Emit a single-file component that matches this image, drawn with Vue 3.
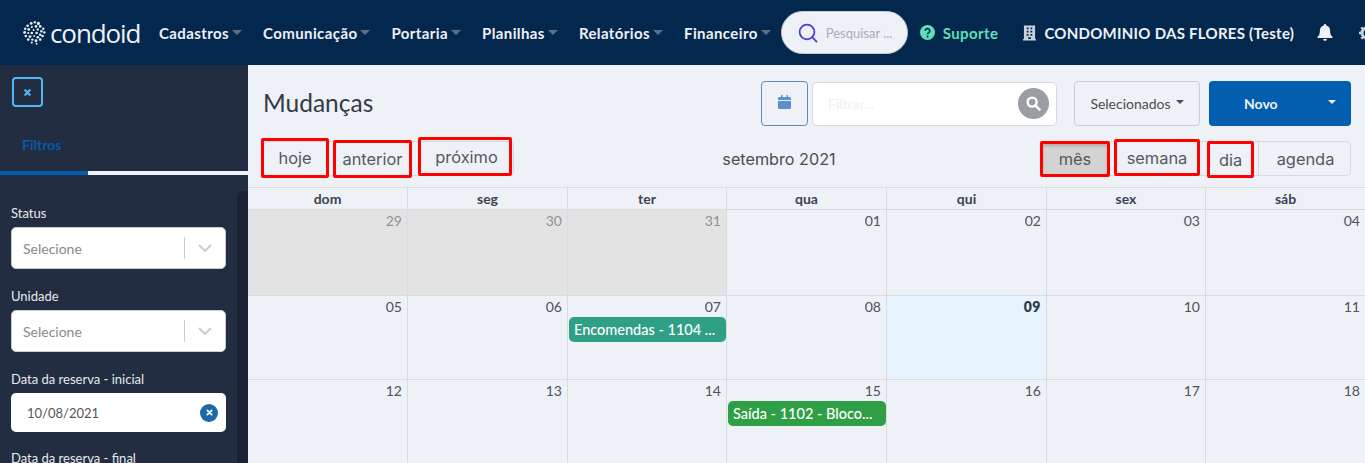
<script setup>
const menu = ['Cadastros', 'Comunicação', 'Portaria', 'Planilhas', 'Relatórios', 'Financeiro']
const weekdays = ['dom', 'seg', 'ter', 'qua', 'qui', 'sex', 'sáb']
const days = [
  { n: '29', off: true }, { n: '30', off: true }, { n: '31', off: true }, { n: '01' }, { n: '02' }, { n: '03' }, { n: '04' },
  { n: '05' }, { n: '06' }, { n: '07', event: 'Encomendas - 1104 ...', color: 'teal' }, { n: '08' }, { n: '09', today: true }, { n: '10' }, { n: '11' },
  { n: '12' }, { n: '13' }, { n: '14' }, { n: '15', event: 'Saída - 1102 - Bloco...', color: 'green' }, { n: '16' }, { n: '17' }, { n: '18' },
]
// pontos do logo
const dots = [[19,6,2.4],[25,4,2],[31,6,2.6],[13,10,2.2],[20,12,1.8],[27,11,2.2],[34,11,2.2],[39,15,2],[9,15,2],[15,16,2.4],[23,17,1.6],[30,16,2],[36,19,2.2],[8,21,2.4],[14,22,1.8],[20,22,2.2],[28,22,2.2],[41,21,2],[34,25,2.2],[10,27,2.2],[17,28,2.4],[24,27,1.6],[30,29,2.2],[38,27,2.2],[14,33,2.2],[21,33,2],[27,35,2.4],[34,33,2.2],[20,38,1.8],[28,40,1.6]]
</script>

<template>
  <div class="page">
    <header class="navbar">
      <div class="brand">
        <svg width="25" height="24" viewBox="6 2 37 40">
          <circle v-for="(d, i) in dots" :key="i" :cx="d[0]" :cy="d[1]" :r="d[2]" fill="#e8edf3" />
        </svg>
        <span>condoid</span>
      </div>
      <nav class="menu">
        <div v-for="m in menu" :key="m" class="menu-item">{{ m }}<i class="caret"></i></div>
      </nav>
      <div class="search">
        <svg width="20" height="20" viewBox="0 0 20 20" fill="none" stroke="#4b3fd8" stroke-width="1.8">
          <circle cx="9" cy="9" r="7.4" />
          <path d="M14.4 14.4 18.6 18.6" stroke-linecap="round" />
        </svg>
        <span>Pesquisar ...</span>
      </div>
      <div class="support">
        <svg width="15" height="15" viewBox="0 0 16 16">
          <circle cx="8" cy="8" r="8" fill="#5fe0bb" />
          <path d="M5.6 6.2a2.400 2.400 0 1 1 3.600 2.100c-.8.400-1.200.800-1.200 1.500" fill="none" stroke="#03274d" stroke-width="1.800" />
          <circle cx="8" cy="12.300" r="1.100" fill="#03274d" />
        </svg>
        <span>Suporte</span>
      </div>
      <div class="condo">
        <svg width="13" height="16" viewBox="0 0 14 16">
          <path fill="#c9d1da" fill-rule="evenodd" d="M1 0h12v14.500h1V16H0v-1.500h1zM4 2v2h2V2zM8 2v2h2V2zM4 5.500v2h2v-2zM8 5.500v2h2v-2zM4 9v2h2V9zM8 9v2h2V9zM5.500 12.500V14.500h3v-2z" />
        </svg>
        <span>CONDOMINIO DAS FLORES (Teste)</span>
      </div>
      <svg class="bell" width="16" height="17" viewBox="0 0 15 16">
        <path fill="#eef1f6" d="M7.500 0a1.200 1.200 0 0 1 1.200 1.300C11 1.800 12.300 3.600 12.300 6c0 3.600.9 4.800 2.200 6.100.3.400 0 1-.5 1H.9c-.5 0-.8-.6-.5-1C1.800 10.800 2.700 9.600 2.700 6c0-2.400 1.300-4.200 3.600-4.700A1.200 1.200 0 0 1 7.500 0zM5.700 14h3.600a1.800 1.800 0 0 1-3.600 0z" />
      </svg>
      <svg class="gear" width="16" height="16" viewBox="0 0 16 16">
        <circle cx="8" cy="8" r="5" fill="none" stroke="#c9d1da" stroke-width="3" />
        <path d="M8 0v3M8 13v3M0 8h3M13 8h3M2.300 2.300l2.100 2.100M11.600 11.600l2.100 2.100M2.300 13.700l2.100-2.100M11.600 4.400l2.100-2.100" stroke="#c9d1da" stroke-width="2.400" />
      </svg>
    </header>

    <div class="body">
      <aside class="sidebar">
        <button class="close-btn">
          <svg width="7" height="7" viewBox="0 0 8 8" stroke="#4db8f2" stroke-width="2.600" stroke-linecap="round">
            <path d="M1.500 1.500 6.500 6.500M6.500 1.500 1.500 6.500" />
          </svg>
        </button>
        <div class="tab-title">Filtros</div>
        <div class="tab-line"><div class="tab-active"></div></div>
        <div class="filters">
          <label>Status</label>
          <div class="select">
            <span>Selecione</span><i class="sep"></i>
            <svg width="14" height="8" viewBox="0 0 14 8" fill="none" stroke="#cccccc" stroke-width="2"><path d="M1 1 7 7 13 1" /></svg>
          </div>
          <label>Unidade</label>
          <div class="select">
            <span>Selecione</span><i class="sep"></i>
            <svg width="14" height="8" viewBox="0 0 14 8" fill="none" stroke="#cccccc" stroke-width="2"><path d="M1 1 7 7 13 1" /></svg>
          </div>
          <label>Data da reserva - inicial</label>
          <div class="date">
            <span>10/08/2021</span>
            <i class="clear">
              <svg width="7" height="7" viewBox="0 0 8 8" stroke="#fff" stroke-width="2" stroke-linecap="round"><path d="M1.500 1.500 6.500 6.500M6.500 1.500 1.500 6.500" /></svg>
            </i>
          </div>
          <label>Data da reserva - final</label>
        </div>
        <div class="side-scroll"></div>
      </aside>

      <main class="main">
        <div class="head">
          <h1>Mudanças</h1>
          <button class="cal-btn">
            <svg width="13" height="14" viewBox="0 0 13 14" fill="#5b8fd0">
              <path d="M3 0h1.500v2h4V0H10v2h1.500A1.500 1.500 0 0 1 13 3.500V5H0V3.500A1.500 1.500 0 0 1 1.500 2H3zM0 6h13v6.500a1.500 1.500 0 0 1-1.500 1.500h-10A1.500 1.500 0 0 1 0 12.500z" />
            </svg>
          </button>
          <div class="filter">
            <span>Filtrar...</span>
            <i class="filter-icon">
              <svg width="15" height="15" viewBox="0 0 16 16" fill="none" stroke="#fff" stroke-width="2.600">
                <circle cx="6.500" cy="6.500" r="4.800" />
                <path d="M10 10 14.500 14.500" stroke-linecap="round" />
              </svg>
            </i>
          </div>
          <button class="sel-btn">Selecionados<i class="sel-caret"></i></button>
          <button class="new-btn"><span>Novo</span><i class="new-caret"></i></button>
        </div>

        <div class="toolbar">
          <div class="tb-group tb-left">
            <button class="fc-btn mark b-hoje">hoje</button>
            <button class="fc-btn mark b-ant">anterior</button>
            <button class="fc-btn mark b-prox">próximo</button>
          </div>
          <div class="tb-title">setembro 2021</div>
          <div class="tb-group tb-right">
            <button class="fc-btn mark active b-mes">mês</button>
            <button class="fc-btn mark b-sem">semana</button>
            <button class="fc-btn mark b-dia">dia</button>
            <button class="fc-btn b-age">agenda</button>
          </div>
        </div>

        <div class="calendar">
          <div v-for="w in weekdays" :key="w" class="wd">{{ w }}</div>
          <div v-for="d in days" :key="d.n + d.off" class="day" :class="{ off: d.off, today: d.today }">
            <div class="num">{{ d.n }}</div>
            <div v-if="d.event" class="event" :class="d.color">{{ d.event }}</div>
          </div>
        </div>
      </main>
    </div>
  </div>
</template>

<style>
html, body { margin: 0; overflow: hidden; }
</style>

<style scoped>
.page { width: 1365px; height: 463px; overflow: hidden; font-family: Lato, "Noto Sans", sans-serif; display: flex; flex-direction: column; }
button { font-family: inherit; cursor: pointer; }
i { font-style: normal; }

.navbar { height: 65px; flex: none; background: #03274d; display: flex; align-items: center; color: #eef1f6; white-space: nowrap; overflow: hidden; }
.brand { display: flex; align-items: center; gap: 3px; margin-left: 22px; width: 137px; flex: none; }
.brand span { font-family: "Open Sans", sans-serif; font-size: 26px; letter-spacing: -1.1px; color: #eef1f6; }
.menu { display: flex; gap: 21px; }
.menu-item { font-size: 15px; font-weight: 700; letter-spacing: 0.4px; display: flex; align-items: center; }
.caret { width: 0; height: 0; border: 5px solid transparent; border-top: 5px solid #5e6f83; border-bottom: 0; margin-left: 3px; }
.search { width: 127px; height: 43px; box-sizing: border-box; background: #eef1f6; border-radius: 22px; border: 1px solid #c6cbd6; margin-left: 10px; display: flex; align-items: center; gap: 8px; padding-left: 16px; flex: none; }
.search span { font-size: 13px; color: #a9adbd; }
.support { display: flex; align-items: center; gap: 8px; margin-left: 12px; color: #5fe0bb; font-size: 15px; font-weight: 700; letter-spacing: 0.4px; }
.condo { display: flex; align-items: center; gap: 8px; margin-left: 25px; font-size: 15px; font-weight: 700; letter-spacing: 0.27px; }
.bell { margin-left: 23px; flex: none; }
.gear { margin-left: 26px; flex: none; }

.body { flex: 1; display: flex; min-height: 0; }
.sidebar { width: 248px; flex: none; background: #232d42; position: relative; color: #e6e9ee; }
.close-btn { width: 31px; height: 30px; margin: 12px 0 0 12px; padding: 0; background: transparent; border: 2px solid #4db8f2; border-radius: 4px; display: flex; align-items: center; justify-content: center; }
.tab-title { margin: 29px 0 0 22px; font-size: 14px; font-weight: 700; color: #0a58a8; }
.tab-line { margin-top: 18px; height: 4px; background: #eef1f6; }
.tab-active { width: 88px; height: 4px; background: #035eaf; }
.filters { padding: 30px 22px 0 11px; }
.filters label { display: block; font-size: 13px; line-height: 16px; margin-bottom: 6px; }
.select { height: 42px; box-sizing: border-box; background: #fff; border-radius: 5px; border: 1px solid #ccc; display: flex; align-items: center; padding-left: 11px; margin-bottom: 19px; }
.select span { flex: 1; font-size: 14px; color: #8a8a8a; }
.sep { width: 1px; height: 22px; background: #ccc; margin-right: 13px; }
.select svg { margin-right: 13px; }
.date { height: 39px; background: #fff; border-radius: 5px; display: flex; align-items: center; padding: 0 8px 0 16px; margin-bottom: 18px; }
.date span { flex: 1; font-size: 13px; color: #555; }
.clear { width: 18px; height: 18px; border-radius: 50%; background: #1b69a8; display: flex; align-items: center; justify-content: center; }
.side-scroll { position: absolute; right: 0; top: 126px; bottom: 0; width: 11px; background: #1a2333; border-radius: 6px 0 0 0; }

.main { flex: 1; min-width: 0; background: #eef1f6; }
.head { display: flex; align-items: center; height: 45px; margin-top: 16px; padding: 0 14px 0 15px; }
h1 { margin: 0 0 2px; flex: 1; font-size: 24.5px; font-weight: 400; color: #343a47; }
.cal-btn { width: 47px; height: 45px; box-sizing: border-box; background: #eef1f6; border: 1px solid #5b8ac4; border-radius: 4px; padding: 0; }
.filter { width: 245px; height: 44px; box-sizing: border-box; margin-left: 4px; background: #fff; border: 1px solid #d5dae2; border-radius: 5px; display: flex; align-items: center; padding: 0 7px 0 15px; }
.filter span { flex: 1; font-size: 14px; color: #eef1f6; }
.filter-icon { width: 31px; height: 31px; border-radius: 50%; background: #9a9da1; display: flex; align-items: center; justify-content: center; }
.sel-btn { width: 126px; height: 45px; box-sizing: border-box; margin-left: 17px; background: #eef1f6; border: 1px solid #c8ccd3; border-radius: 4px; font-size: 14px; color: #4a4d52; display: flex; align-items: center; justify-content: center; padding: 0; }
.sel-caret { width: 0; height: 0; border: 4px solid transparent; border-top: 4px solid #4a4d52; border-bottom: 0; margin-left: 5px; margin-top: -3px; }
.new-btn { width: 142px; height: 45px; margin-left: 9px; background: #035eaf; border: 0; border-radius: 4px; color: #eef1f6; font-size: 14px; font-weight: 700; display: flex; align-items: center; padding: 0 15px 0 35px; text-align: left; }
.new-btn span { flex: 1; }
.new-caret { width: 0; height: 0; border: 4.5px solid transparent; border-top: 4.5px solid #eef1f6; border-bottom: 0; margin-top: -3px; }

.toolbar { display: flex; align-items: flex-start; justify-content: space-between; height: 35px; margin-top: 15px; padding: 0 14px 0 15px; }
.tb-group { display: flex; align-items: flex-start; flex: none; height: 35px; box-sizing: border-box; border: 1px solid #d5d9df; border-radius: 5px; }
.tb-left { width: 251px; }
.tb-right { width: 309px; }
.tb-title { font-family: Inter, sans-serif; font-size: 16.2px; line-height: 35px; color: #494d57; margin: 1px 0 0 2px; }
.fc-btn { box-sizing: border-box; background: #eef1f6; border: 0; padding: 0; font-family: Inter, sans-serif; font-size: 16.4px; color: #55585e; flex: none; }
.fc-btn.mark { border: 3px solid #ff0000; border-radius: 2px; background: transparent; }
.fc-btn.active { background: #d3d3d3; box-shadow: inset 0 2px 3px rgba(0,0,0,0.18); }
.b-hoje { width: 68px; height: 40px; margin: -4px 0 0 -3px; }
.b-ant { width: 79px; height: 38px; margin: -2px 0 0 4px; }
.b-prox { width: 94px; height: 39px; margin: -5px 0 0 6px; padding-left: 3px; }
.b-mes { width: 70px; height: 36px; margin: -1px 0 0 -3px; }
.b-sem { width: 86px; height: 37px; margin: -3px 0 0 4px; }
.b-dia { width: 47px; height: 37px; margin: -1px 0 0 7px; }
.b-age { width: 94px; height: 33px; margin-left: 4px; border-left: 1px solid #d5d9df; background: transparent; border-radius: 0 4px 4px 0; }

.calendar { display: grid; grid-template-columns: 159px 160px 159px 160px 160px 159px 160px; grid-template-rows: 22px 86px 84px 85px; margin-top: 11px; border-top: 1px solid #d8dce1; }
.wd { border-left: 1px solid #d8dce1; border-bottom: 1px solid #d8dce1; text-align: center; font-size: 14px; font-weight: 700; line-height: 21px; color: #3d4350; }
.wd:first-child, .day:nth-child(7n+1) { border-left: 0; }
.day { border-left: 1px solid #d8dce1; border-bottom: 1px solid #d8dce1; box-sizing: border-box; min-width: 0; padding: 2px 5px 0 1px; }
.day.off { background: #e3e3e3; }
.day.off .num { color: #8f9296; }
.day.today { background: #e8f4fd; }
.day.today .num { font-weight: 800; color: #343a47; letter-spacing: 0.5px; }
.num { text-align: right; font-size: 14px; line-height: 18px; color: #4c5260; }
.event { margin: 1px -5px 0 0; height: 25px; line-height: 25px; box-sizing: border-box; padding: 0 5px; border-radius: 5px; color: #fff; font-size: 14.5px; font-weight: 500; white-space: nowrap; }
.event.teal { background: #2fa085; }
.event.green { background: #2f9f45; }
</style>
